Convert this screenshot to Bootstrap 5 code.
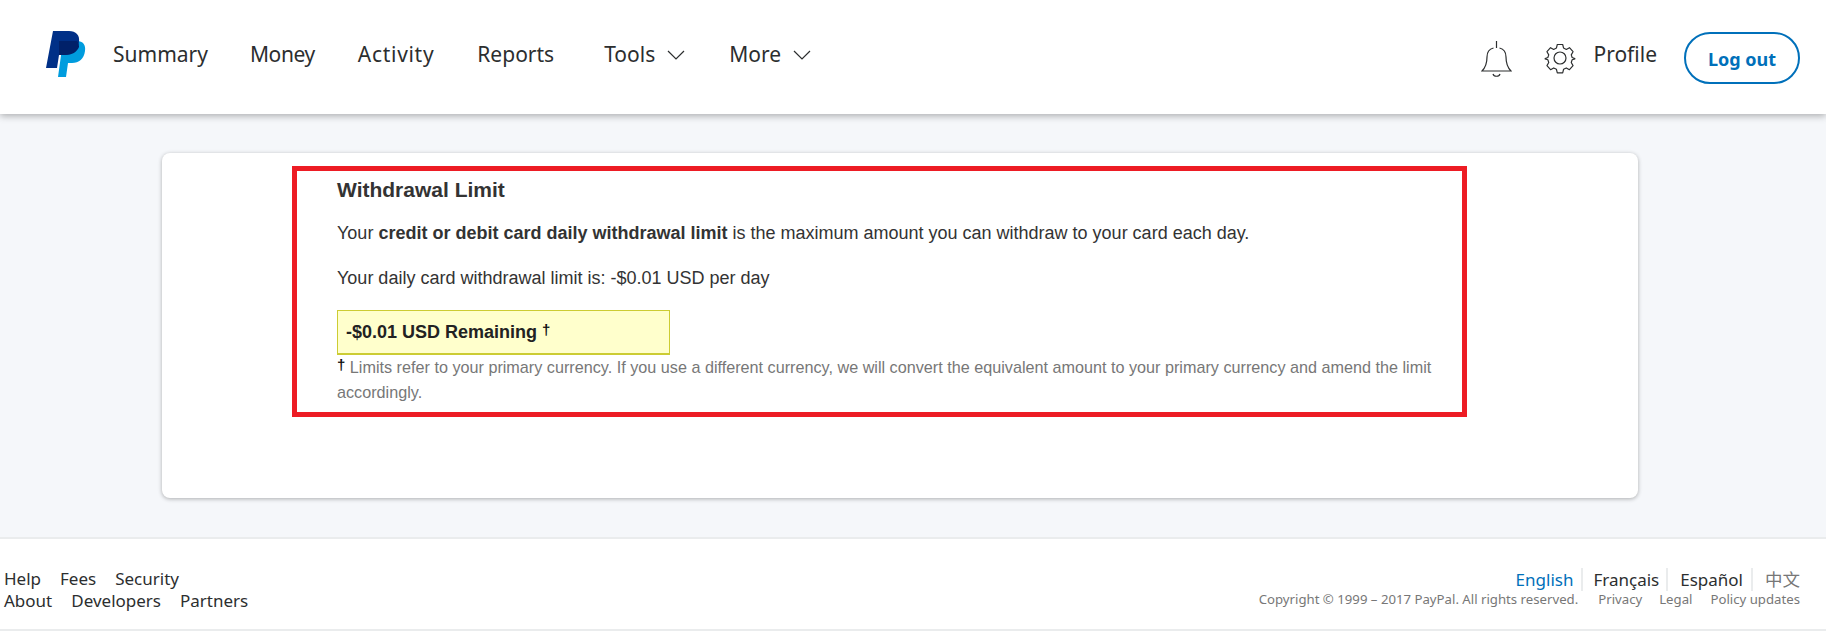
<!DOCTYPE html>
<html lang="en">
<head>
  <meta charset="UTF-8">
  <meta name="viewport" content="width=device-width, initial-scale=1.0">
  <title>Withdrawal Limit</title>
  <link href="https://cdn.jsdelivr.net/npm/bootstrap@5.3.2/dist/css/bootstrap.min.css" rel="stylesheet">
  <style>
    body {
      background: #f5f7fa;
      font-family: "Noto Sans", sans-serif;
      color: #2c2e2f;
      overflow: hidden;
    }
    .top-bar {
      height: 114px;
      background: #fff;
      box-shadow: 0 2px 7px rgba(0, 0, 0, .3);
      padding: 0 26px 0 46px;
      position: relative;
    }
    .pp-logo { width: 40px; height: 46px; margin-right: 27px; margin-top: -6px; }
    .top-link {
      font-size: 21px;
      color: #2c2e2f;
      text-decoration: none;
      margin-right: 42px;
      margin-top: -4px;
    }
    .nav-money { margin-right: 43px; letter-spacing: -.4px; }
    .nav-activity { margin-right: 43px; letter-spacing: .7px; }
    .nav-reports { margin-right: 50px; }
    .top-link.has-menu { margin-right: 44px; }
    .top-link svg { margin-left: 12px; vertical-align: 2px; }
    .icon-bell { margin-right: 32px; margin-top: 4px; }
    .icon-gear { margin-right: 17px; margin-top: 1px; }
    .top-link.profile { margin: -4px 27px 0 0; }
    .logout-btn {
      --bs-btn-color: #0070ba;
      --bs-btn-border-color: #0070ba;
      --bs-btn-hover-color: #0070ba;
      --bs-btn-hover-bg: #fff;
      --bs-btn-hover-border-color: #0070ba;
      --bs-btn-border-width: 2px;
      --bs-btn-border-radius: 26px;
      --bs-btn-font-weight: 700;
      --bs-btn-font-size: 18px;
      width: 116px;
      height: 52px;
      margin-top: 2px;
      padding: 2px 0 0;
    }
    .content-area { height: 423px; padding: 39px 188px 39px 162px; }
    .main-panel {
      height: 345px;
      background: #fff;
      border-radius: 8px;
      box-shadow: 0 1px 4px rgba(0, 0, 0, .3);
      padding: 13px 0 0 130px;
      font-family: "Liberation Sans", Arial, sans-serif;
    }
    .red-frame {
      width: 1175px;
      height: 251px;
      border: 5px solid #ed1c24;
      padding: 7px 0 0 40px;
    }
    .limit-title { font-size: 21px; font-weight: 700; line-height: 24px; margin: 0 0 18px; color: #333; }
    .limit-text { font-size: 18px; line-height: 26px; margin: 0 0 19px; color: #333; }
    .remaining-box {
      width: 333px;
      height: 45px;
      margin-top: 2px;
      background: #ffc;
      border: 1px solid #cc3;
      border-bottom-width: 2px;
      padding: 0 0 0 8px;
      font-size: 18px;
      font-weight: 700;
      color: #222;
      line-height: 43px;
    }
    .remaining-box sup, .foot-note sup { font-size: 15px; font-weight: 700; top: -.2em; color: #111; }
    .foot-note { font-size: 16.2px; line-height: 25px; color: #777; margin: 0; width: 1110px; }
    .page-foot {
      height: 94px;
      background: #fff;
      border-top: 2px solid #eaeced;
      border-bottom: 2px solid #eaeced;
      padding: 29px 26px 0 4px;
      font-size: 17px;
      line-height: 22px;
    }
    .page-foot a { color: #2c2e2f; text-decoration: none; }
    .foot-left a { margin-right: 19px; }
    .lang-row a { padding: 0 8px 0 12px; border-right: 2px solid #eaeced; font-size: 17px; }
    .lang-row a:last-child { border-right: 0; padding-right: 0; }
    .lang-row a.current { color: #0070ba; }
    .lang-row a.lang-fr { padding: 0 7px 0 10px; }
    .lang-row a.zh { font-family: "Noto Sans CJK SC", sans-serif; color: #777; font-size: 17.5px; }
    .legal-row { font-size: 13.2px; line-height: 16px; color: #777; }
    .legal-row a { color: #777; margin-left: 20px; }
    .legal-row a.legal-mid { margin-left: 17px; }
    .legal-row a.legal-last { margin-left: 18px; }
  </style>
</head>
<body>

<header class="top-bar d-flex align-items-center">
  <svg class="pp-logo" viewBox="0 0 40 46" aria-label="PayPal">
    <path fill="#009cde" d="M17 10h14c6 0 9 4 8 10-1 8-6 12-13 12h-4l-2 14h-8z"/>
    <path fill="#003087" d="M7 0h16c7 0 11 4 10 11-1 8-7 13-14 13h-6l-2 13H0z"/>
    <path fill="#012169" d="M13 10h18c2 2 2 5 2 6-2 5-7 8-14 8h-6z"/>
  </svg>
  <a class="top-link" href="#">Summary</a>
  <a class="top-link nav-money" href="#">Money</a>
  <a class="top-link nav-activity" href="#">Activity</a>
  <a class="top-link nav-reports" href="#">Reports</a>
  <a class="top-link has-menu" href="#">Tools<svg width="18" height="10" viewBox="0 0 18 10"><path d="M1 1l8 8 8-8" fill="none" stroke="#2c2e2f" stroke-width="1.2"/></svg></a>
  <a class="top-link has-menu" href="#">More<svg width="18" height="10" viewBox="0 0 18 10"><path d="M1 1l8 8 8-8" fill="none" stroke="#2c2e2f" stroke-width="1.2"/></svg></a>

  <div class="ms-auto d-flex align-items-center">
    <svg class="icon-bell" width="31" height="36" viewBox="0 0 31 36">
      <path d="M15.500 0v7M12.500 7C8 8 6 11 6 16c0 6-1 10-5 14h29c-4-4-5-8-5-14 0-5-2-8-6.500-9M1 30h29M12 33c1 3 6 3 7 0" fill="none" stroke="#2c2e2f" stroke-width="1.200"/>
    </svg>
    <svg class="icon-gear" width="32" height="32" viewBox="0 0 32 32">
      <circle cx="16" cy="16" r="6" fill="none" stroke="#2c2e2f" stroke-width="1.200"/>
      <path d="M13 1h6l1 4 3 1.500 3.500-2 4 4.500-2 3.500 1 3 3 1v0.500l-3 1-1 3 2 3.500-4 4.500-3.500-2-3 1.500-1 4h-6l-1-4-3-1.500-3.500 2-4-4.500 2-3.500-1-3-3-1v-.5l3-1 1-3-2-3.500 4-4.500 3.500 2 3-1.500z" transform="translate(1.600 1.600) scale(.9)" fill="none" stroke="#2c2e2f" stroke-width="1.300" stroke-linejoin="round"/>
    </svg>
    <a class="top-link profile" href="#">Profile</a>
    <a class="btn logout-btn d-flex align-items-center justify-content-center" href="#">Log out</a>
  </div>
</header>

<main class="content-area">
  <section class="main-panel">
    <div class="red-frame">
      <h2 class="limit-title">Withdrawal Limit</h2>
      <p class="limit-text">Your <strong>credit or debit card daily withdrawal limit</strong> is the maximum amount you can withdraw to your card each day.</p>
      <p class="limit-text">Your daily card withdrawal limit is: -$0.01 USD per day</p>
      <div class="remaining-box">-$0.01 USD Remaining <sup>†</sup></div>
      <p class="foot-note"><sup>†</sup> Limits refer to your primary currency. If you use a different currency, we will convert the equivalent amount to your primary currency and amend the limit accordingly.</p>
    </div>
  </section>
</main>

<footer class="page-foot d-flex justify-content-between">
  <div class="foot-left">
    <div><a href="#">Help</a><a href="#">Fees</a><a href="#">Security</a></div>
    <div><a href="#">About</a><a href="#">Developers</a><a href="#">Partners</a></div>
  </div>
  <div class="text-end">
    <div class="lang-row"><a class="current" href="#">English</a><a class="lang-fr" href="#">Français</a><a href="#">Español</a><a class="zh" href="#">中文</a></div>
    <div class="legal-row">Copyright © 1999 – 2017 PayPal. All rights reserved.<a href="#">Privacy</a><a class="legal-mid" href="#">Legal</a><a class="legal-last" href="#">Policy updates</a></div>
  </div>
</footer>

<script src="https://cdn.jsdelivr.net/npm/bootstrap@5.3.2/dist/js/bootstrap.bundle.min.js"></script>
</body>
</html>
